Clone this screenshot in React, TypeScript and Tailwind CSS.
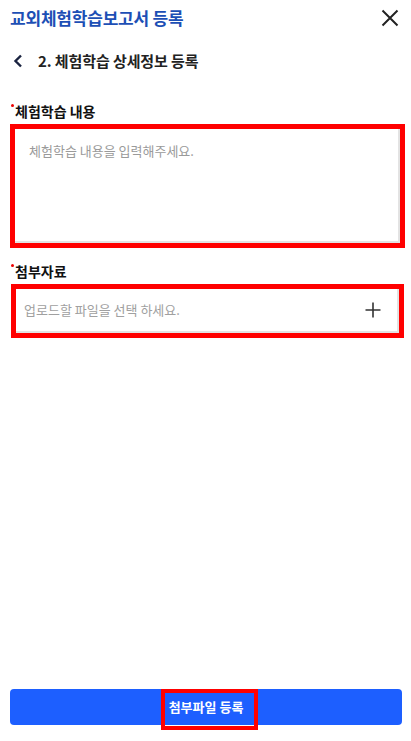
import React from 'react';

const font = { fontFamily: '"Noto Sans CJK KR", "Noto Sans", sans-serif' };

export default function App() {
  return (
    <div className="w-[411px] h-[741px] bg-white flex flex-col relative overflow-hidden" style={font}>
      {/* Header */}
      <div className="flex items-center justify-between pl-[10px] pr-[12px] h-[36px]">
        <h1 className="text-[17px] font-bold text-[#1d4fb5] tracking-[-0.2px]">교외체험학습보고서 등록</h1>
        <svg width="18" height="18" viewBox="0 0 18 18">
          <path d="M1.5 1.5 L16.5 16.5 M16.5 1.5 L1.5 16.5" stroke="#222" strokeWidth="2" fill="none" />
        </svg>
      </div>

      {/* Step */}
      <div className="flex items-center h-[50px] pl-[13px]">
        <svg width="10" height="14" viewBox="0 0 10 14">
          <path d="M8 1.5 L2.5 7 L8 12.5" stroke="#1a2340" strokeWidth="2.4" fill="none" />
        </svg>
        <span className="ml-[15px] text-[15px] font-bold text-[#222] tracking-[-0.1px]">2. 체험학습 상세정보 등록</span>
      </div>

      {/* 체험학습 내용 */}
      <div className="mt-[16px] px-[10px]">
        <div className="flex items-start pl-[1px] h-[19px]">
          <span className="w-[3px] h-[3px] rounded-full bg-[#e00] mt-[2px]" />
          <span className="ml-[1px] text-[14px] leading-[19px] font-bold text-[#111]">체험학습 내용</span>
        </div>
        <div className="mt-[3px] border-[5px] border-[#ff0000] w-[395px]">
          <div className="h-[114px] bg-white border-b-[2px] border-r-[2px] border-[#e3e3e3] px-[14px] pt-[8px]">
            <span className="text-[13px] text-[#9a9a9a]">체험학습 내용을 입력해주세요.</span>
          </div>
        </div>
      </div>

      {/* 첨부자료 */}
      <div className="mt-[14px] px-[11px]">
        <div className="flex items-start h-[19px]">
          <span className="w-[3px] h-[3px] rounded-full bg-[#e00] mt-[2px]" />
          <span className="ml-[1px] text-[14px] leading-[19px] font-bold text-[#111]">첨부자료</span>
        </div>
        <div className="mt-[3px] border-[5px] border-[#ff0000] w-[393px]">
          <div className="h-[44px] flex items-center justify-between bg-white border-b-[2px] border-r-[2px] border-[#e3e3e3] pl-[8px] pr-[16px]">
            <span className="text-[13px] text-[#a0a0a0]">업로드할 파일을 선택 하세요.</span>
            <svg width="16" height="16" viewBox="0 0 16 16">
              <path d="M8 0.5 V15.5 M0.5 8 H15.5" stroke="#333" strokeWidth="1.6" fill="none" />
            </svg>
          </div>
        </div>
      </div>

      <div className="flex-1" />

      {/* Bottom button */}
      <div className="px-[10px] pb-[16px]">
        <div className="relative h-[36px] w-[392px] rounded-[4px] bg-[#1d5fff] flex items-center justify-center">
          <span className="text-[13px] font-bold text-white">첨부파일 등록</span>
          <div className="absolute left-[151px] top-0 w-[97px] h-[41px] border-[4px] border-[#ff0000]" />
        </div>
      </div>
    </div>
  );
}
